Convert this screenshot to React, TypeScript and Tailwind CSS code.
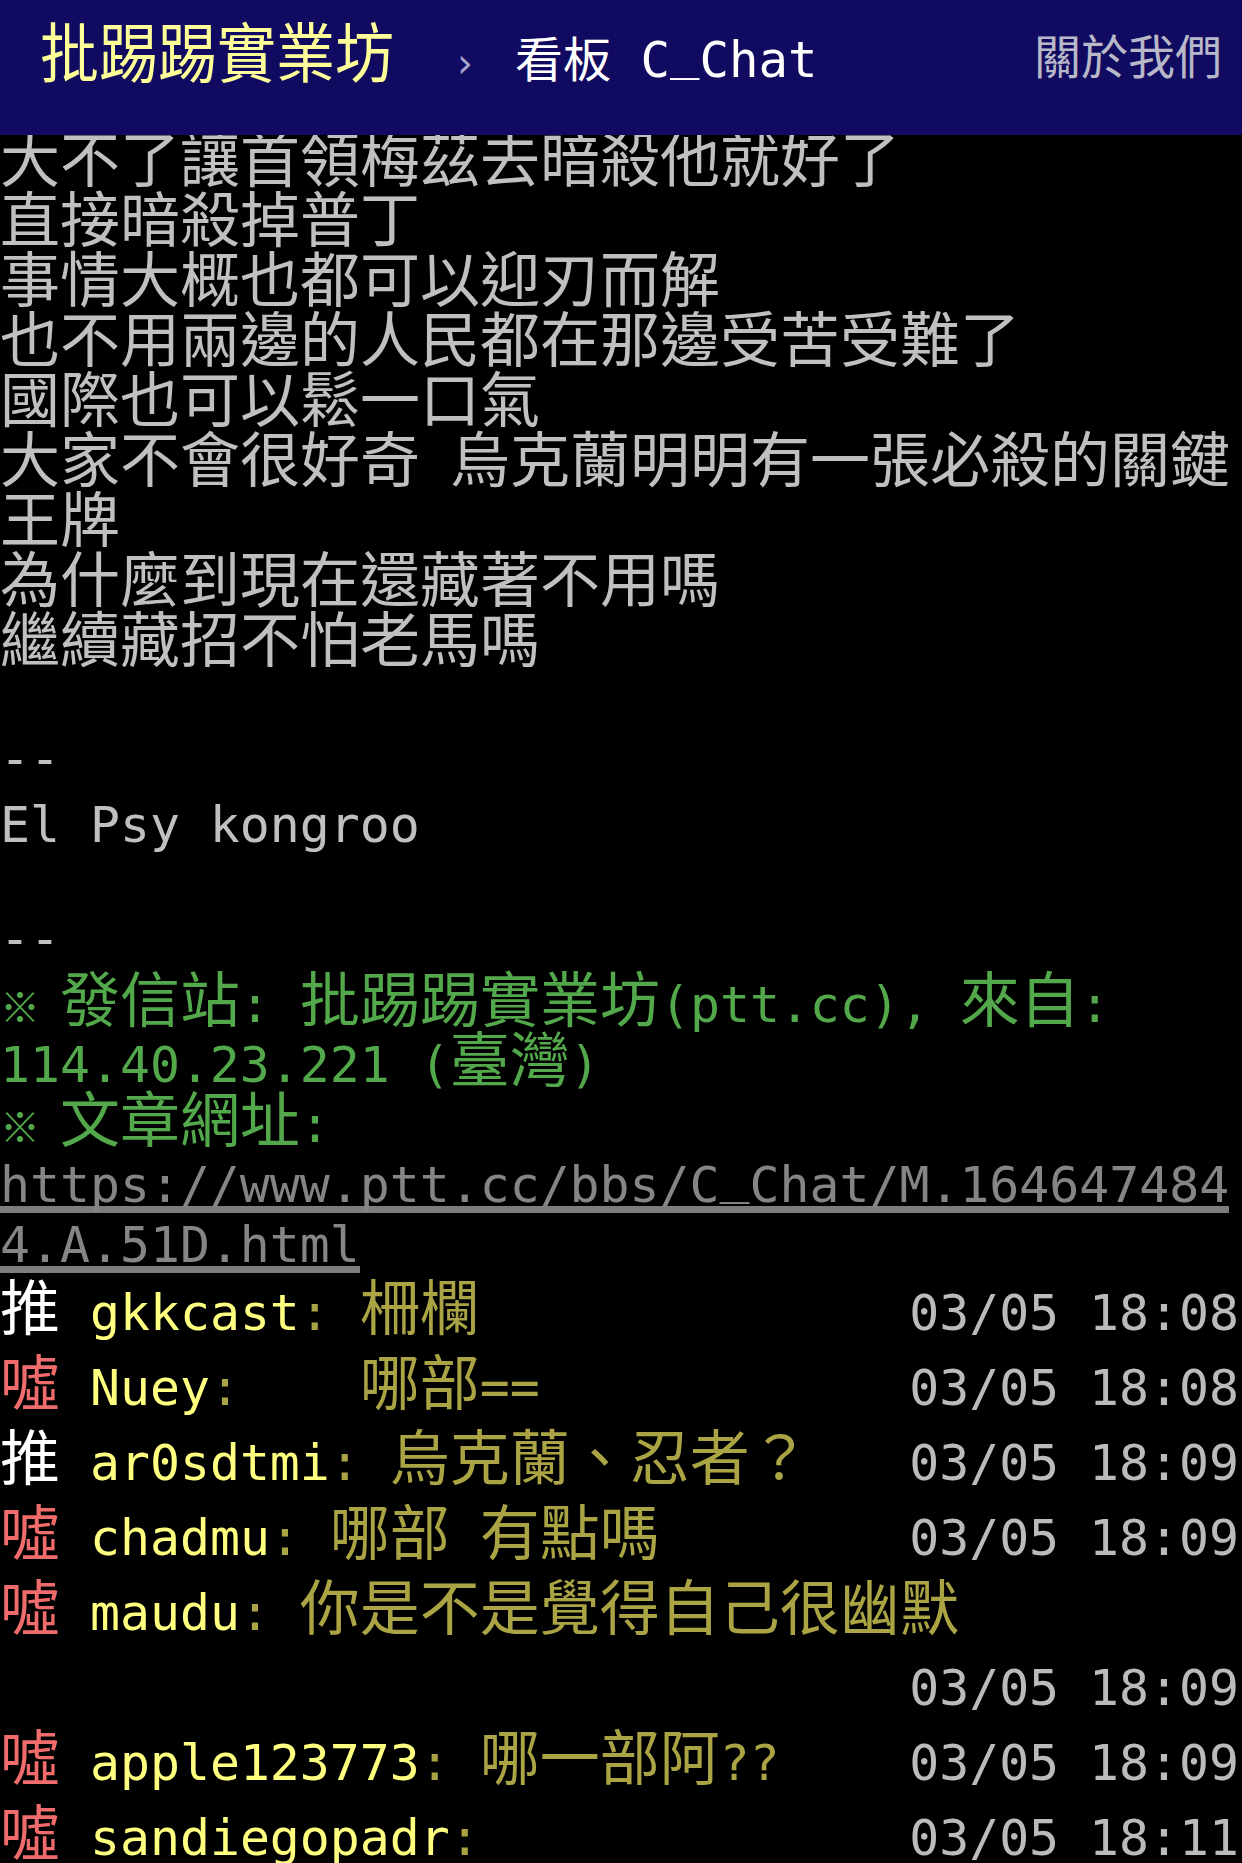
import React from "react"

const mono = "font-['DejaVu_Sans_Mono',monospace] text-[49.8px] leading-[0]"

// underscores and dashes sit higher in the reference's mono font
function Ascii({ s }: { s: string }) {
  const parts = s.split(/([_-]+)/)
  return (
    <>
      {parts.map((p, i) => {
        if (!p) return null
        if (p[0] === "_")
          return (
            <span key={i} className="relative -top-[10px]">
              {p}
            </span>
          )
        if (p[0] === "-")
          return (
            <span key={i} className="relative -top-[6px]">
              {p}
            </span>
          )
        return <React.Fragment key={i}>{p}</React.Fragment>
      })}
    </>
  )
}

// splits a line into ASCII runs (half-width, mono) and CJK runs (full-width)
function Txt({ s }: { s: string }) {
  const parts = s.split(/([\x00-\x7f]+|※)/)
  return (
    <>
      {parts.map((p, i) => {
        if (!p) return null
        if (p === "※")
          return (
            <span key={i} className="text-[40px] leading-[0] tracking-[-10px]">
              ※
            </span>
          )
        if (/^[\x00-\x7f]+$/.test(p))
          return (
            <span key={i} className={mono}>
              <Ascii s={p} />
            </span>
          )
        return <span key={i}>{p}</span>
      })}
    </>
  )
}

type Line = { s: string; tone?: "body" | "green" | "link" }

const lines: Line[] = [
  { s: "大不了讓首領梅茲去暗殺他就好了" },
  { s: "直接暗殺掉普丁" },
  { s: "事情大概也都可以迎刃而解" },
  { s: "也不用兩邊的人民都在那邊受苦受難了" },
  { s: "國際也可以鬆一口氣" },
  { s: "大家不會很好奇 烏克蘭明明有一張必殺的關鍵" },
  { s: "王牌" },
  { s: "為什麼到現在還藏著不用嗎" },
  { s: "繼續藏招不怕老馬嗎" },
  { s: "" },
  { s: "--" },
  { s: "El Psy kongroo" },
  { s: "" },
  { s: "--" },
  { s: "※ 發信站: 批踢踢實業坊(ptt.cc), 來自:", tone: "green" },
  { s: "114.40.23.221 (臺灣)", tone: "green" },
  { s: "※ 文章網址:", tone: "green" },
  { s: "https://www.ptt.cc/bbs/C_Chat/M.164647484", tone: "link" },
  { s: "4.A.51D.html", tone: "link" },
]

type Push = { tag: "推" | "噓"; user: string; content: string; date: string; wrap?: boolean }

const pushes: Push[] = [
  { tag: "推", user: "gkkcast", content: ": 柵欄", date: "03/05 18:08" },
  { tag: "噓", user: "Nuey", content: ":    哪部==", date: "03/05 18:08" },
  { tag: "推", user: "ar0sdtmi", content: ": 烏克蘭、忍者？", date: "03/05 18:09" },
  { tag: "噓", user: "chadmu", content: ": 哪部 有點嗎", date: "03/05 18:09" },
  { tag: "噓", user: "maudu", content: ": 你是不是覺得自己很幽默", date: "03/05 18:09", wrap: true },
  { tag: "噓", user: "apple123773", content: ": 哪一部阿??", date: "03/05 18:09" },
  { tag: "噓", user: "sandiegopadr", content: ":", date: "03/05 18:11" },
]

function PushLeft({ p }: { p: Push }) {
  return (
    <div>
      <span className={p.tag === "推" ? "text-white" : "text-[#f06b6b]"}>{p.tag}</span>
      <span className={mono}> </span>
      <span className="text-[#ffff80]">
        <Txt s={p.user} />
      </span>
      <span className="text-[#aaa444]">
        <Txt s={p.content} />
      </span>
    </div>
  )
}

export default function App() {
  return (
    <div className="min-h-screen bg-black font-['Noto_Sans_CJK_TC',sans-serif]">
      {/* Top bar */}
      <header className="sticky top-0 z-10 h-[135px] bg-[#100b60] flex items-center justify-between pb-[28px] pl-[40px] pr-[20px]">
        <div className="flex items-baseline">
          <span className="inline-block origin-bottom scale-y-[1.1] text-[59px] leading-none text-[#ffff99]">批踢踢實業坊</span>
          <span className="ml-[63px] font-['DejaVu_Sans',sans-serif] text-[40px] leading-none text-[#a4a4cc]">›</span>
          <span className="ml-[42px] text-[48px] leading-none text-white">
            看板
            <span className="font-['DejaVu_Sans_Mono',monospace] text-[49px]">
              {" C"}
              <span className="relative -top-[9px]">_</span>
              {"Chat"}
            </span>
          </span>
        </div>
        <span className="text-[47px] leading-none text-[#b8b8c8]">關於我們</span>
      </header>

      {/* Article body */}
      <main className="-mt-[9px] text-[60px] leading-[60px] text-[#c0c0c0] whitespace-pre">
        {lines.map((l, i) => (
          <div
            key={i}
            className={
              l.tone === "green"
                ? "h-[60px] text-[#52a84a]"
                : l.tone === "link"
                  ? "h-[60px] w-fit text-[#858585] shadow-[0_7px_0_#7d7d7d]"
                  : "h-[60px]"
            }
          >
            <Txt s={l.s} />
          </div>
        ))}

        {/* Pushes */}
        {pushes.map((p, i) =>
          p.wrap ? (
            <React.Fragment key={i}>
              <div className="flex h-[75px] leading-[75px]">
                <PushLeft p={p} />
              </div>
              <div className="flex h-[75px] leading-[75px] justify-end pr-[3px] text-[#bbbbbb]">
                <div>
                  <Txt s={p.date} />
                </div>
              </div>
            </React.Fragment>
          ) : (
            <div key={i} className="flex h-[75px] leading-[75px] justify-between pr-[3px]">
              <PushLeft p={p} />
              <div className="text-[#bbbbbb]">
                <Txt s={p.date} />
              </div>
            </div>
          )
        )}
      </main>
    </div>
  )
}
